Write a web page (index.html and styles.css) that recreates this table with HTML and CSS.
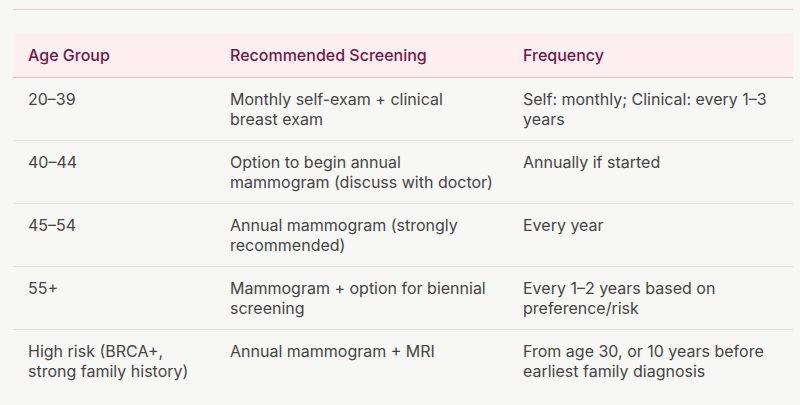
FILE: index.html
```html
<!DOCTYPE html>
<html lang="en">
<head>
<meta charset="utf-8">
<link rel="stylesheet" href="styles.css">
</head>
<body>
<div class="page">
  <div class="rule"></div>
  <table class="screening">
    <thead>
      <tr>
        <th class="c1">Age Group</th>
        <th class="c2">Recommended Screening</th>
        <th class="c3">Frequency</th>
      </tr>
    </thead>
    <tbody>
      <tr>
        <td>20–39</td>
        <td>Monthly self-exam + clinical breast exam</td>
        <td>Self: monthly; Clinical: every 1–3 years</td>
      </tr>
      <tr>
        <td>40–44</td>
        <td>Option to begin annual mammogram (discuss with doctor)</td>
        <td>Annually if started</td>
      </tr>
      <tr>
        <td>45–54</td>
        <td>Annual mammogram (strongly recommended)</td>
        <td>Every year</td>
      </tr>
      <tr>
        <td>55+</td>
        <td>Mammogram + option for biennial screening</td>
        <td>Every 1–2 years based on preference/risk</td>
      </tr>
      <tr>
        <td>High risk (BRCA+, strong family history)</td>
        <td>Annual mammogram + MRI</td>
        <td>From age 30, or 10 years before earliest family diagnosis</td>
      </tr>
    </tbody>
  </table>
</div>
</body>
</html>
```
FILE: styles.css
```css
html, body {
  margin: 0;
  padding: 0;
  background: #f7f7f5;
}
body {
  font-family: Inter, "Noto Sans", sans-serif;
  font-size: 16px;
  line-height: 20px;
  color: #454545;
}
.page {
  width: 780px;
  padding: 9px 0 0 13px;
}
.rule {
  height: 1px;
  background: #f2c4d4;
  margin-bottom: 23px;
}
.screening {
  width: 780px;
  border-collapse: collapse;
  table-layout: fixed;
}
.screening th {
  background: #fdeef2;
  color: #6e1a43;
  font-weight: 500;
  text-align: left;
  padding: 12px 15px;
  border-bottom: 1px solid #efb8cc;
}
.screening td {
  text-align: left;
  vertical-align: top;
  padding: 11px 15px;
  border-bottom: 1px solid #e2e2e0;
}
.screening tbody tr:last-child td {
  border-bottom: none;
}
.c1 { width: 172px; }
.c2 { width: 263px; }
.c3 { width: 255px; }
```
